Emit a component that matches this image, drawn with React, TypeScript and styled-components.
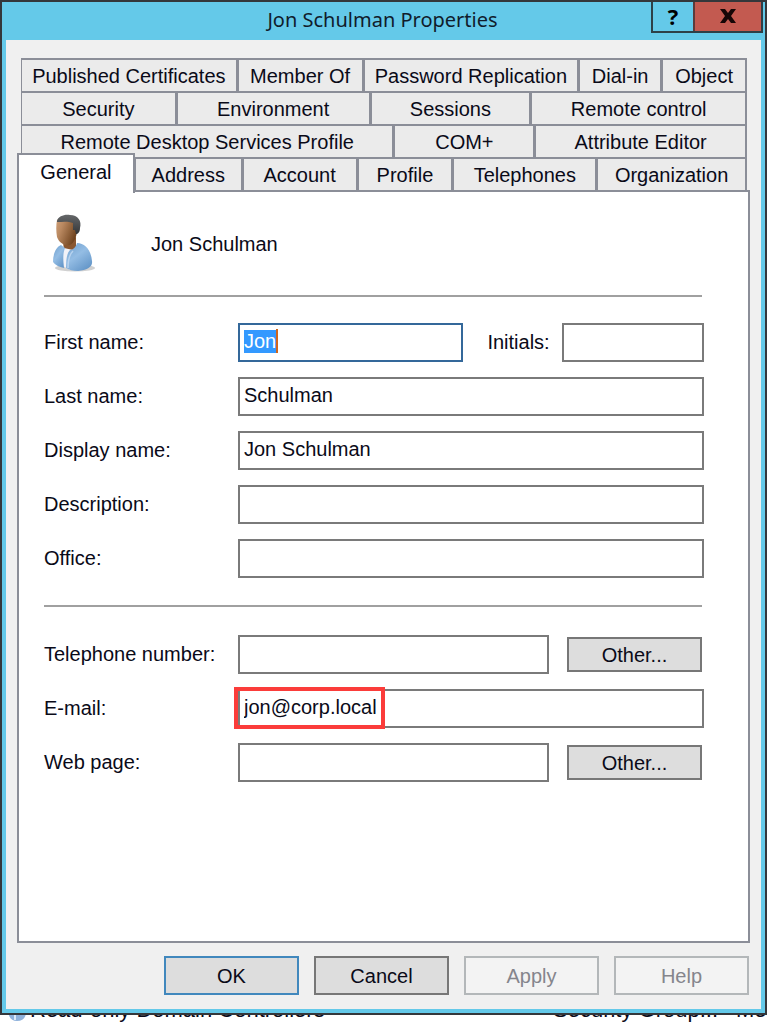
import React, { useEffect, useRef } from "react";
import styled, { createGlobalStyle } from "styled-components";

const edge = "#8b8e98";

const GlobalStyle = createGlobalStyle`
  *, *::before, *::after { box-sizing: border-box; }
  html, body { margin: 0; background: #fff; }
  body, button, input {
    font-family: "Liberation Sans", Arial, sans-serif;
    font-size: 20px;
    line-height: 24px;
    color: #0a0a18;
  }
`;

const Desktop = styled.div`
  display: flex;
  flex-direction: column;
  height: 100vh;
  min-height: 900px;
  overflow: hidden;
`;

const Dialog = styled.main`
  flex: 1;
  display: flex;
  flex-direction: column;
  border: 2px solid #34373b;
  background: #64c9e9;
  padding: 0 4px 4px;
  position: relative;
  z-index: 1;
`;

const TitleBar = styled.header`
  display: flex;
  align-items: flex-start;
  height: 38px;
`;

const Title = styled.h1`
  flex: 1;
  margin: 0;
  padding: 5px 0 0 108px;
  text-align: center;
  font: 400 20px/26px "Noto Sans", "Open Sans", sans-serif;
  color: #101c2c;
`;

const CaptionButtons = styled.div`
  display: flex;
  margin-right: -2px;
  border: 2px solid #2d4048;
  border-top: 0;
`;

const CaptionButton = styled.button<{ $close?: boolean }>`
  display: flex;
  align-items: center;
  justify-content: center;
  width: ${(p) => (p.$close ? 68 : 40)}px;
  height: 29px;
  padding: 0 0 2px;
  border: 0;
  border-left: ${(p) => (p.$close ? "2px solid #5c3b3b" : "0")};
  background: ${(p) => (p.$close ? "#c35a50" : "transparent")};
  font: 700 22px/26px "Open Sans", sans-serif;
  color: #000;
`;

const Body = styled.div`
  flex: 1;
  display: flex;
  flex-direction: column;
  padding: 18px 11px 14px;
  background: #f0f0f0;
`;

const Tabs = styled.div`
  padding: 0 3px 0 4px;
`;

const TabRow = styled.div<{ $columns: string }>`
  display: grid;
  grid-template-columns: ${(p) => p.$columns};
  height: 33px;
  border-left: 1px solid ${edge};
`;

const Tab = styled.button<{ $active?: boolean }>`
  min-width: 0;
  padding: 0;
  border: 0 solid ${edge};
  border-width: 2px 2px 0 1px;
  background: #ebebeb;
  white-space: nowrap;
  &:first-child { border-left-width: 0; }
  ${(p) =>
    p.$active &&
    `
    position: relative;
    z-index: 1;
    margin: -4px 0 -3px -5px;
    padding: 0 0 4px;
    background: #fff;
    &&:first-child { border-left-width: 2px; }
  `}
`;

const Panel = styled.section`
  flex: 1;
  padding: 24px 44px 24px 25px;
  border: 2px solid ${edge};
  background: #fff;
`;

const Identity = styled.div`
  display: flex;
  align-items: center;
  gap: 54px;
  height: 56px;
  padding-left: 9px;
`;

const Divider = styled.hr<{ $roomy?: boolean }>`
  height: 2px;
  margin: ${(p) => (p.$roomy ? "27px 2px 28px 0" : "23px 2px 26px 0")};
  border: 0;
  background: #a0a0a0;
`;

const Fields = styled.div`
  display: grid;
  gap: 15px;
`;

const Field = styled.div`
  display: flex;
  align-items: center;
`;

const Label = styled.label<{ $short?: boolean }>`
  flex: none;
  width: ${(p) => (p.$short ? 75 : 194)}px;
  padding-bottom: 2px;
`;

const Box = styled.div<{ $grow?: number }>`
  position: relative;
  flex: ${(p) => p.$grow ?? 1} 1 0;
  min-width: 0;
`;

const TextInput = styled.input`
  display: block;
  width: 100%;
  height: 39px;
  padding: 0 4px 3px;
  border: 2px solid #7a7a7a;
  border-radius: 0;
  background: #fff;
  outline: none;
  &:focus { border-color: #34689a; }
  &::selection { background: #3399ff; color: #fff; }
`;

const Caret = styled.span`
  position: absolute;
  top: 6px;
  left: 38px;
  width: 2px;
  height: 24px;
  background: #d0661c;
`;

const Highlight = styled.span`
  position: absolute;
  top: -2px;
  left: -4px;
  width: 151px;
  height: 42px;
  border: 4px solid #fb3c3a;
  pointer-events: none;
`;

const Spacer = styled.span<{ $wide?: boolean }>`
  flex: none;
  width: ${(p) => (p.$wide ? 24 : 18)}px;
`;

const PushButton = styled.button<{ $kind?: "default" | "small" }>`
  width: 135px;
  height: ${(p) => (p.$kind === "small" ? 35 : 39)}px;
  margin-right: ${(p) => (p.$kind === "small" ? 2 : 0)}px;
  padding: 0;
  border: 2px solid ${(p) => (p.$kind === "default" ? "#4188bd" : "#777")};
  background: #ddd;
  &:disabled {
    border-color: #b3b7b9;
    background: #f3f3f3;
    color: #85858c;
  }
`;

const Actions = styled.footer`
  display: flex;
  justify-content: flex-end;
  gap: 15px;
  margin-top: 13px;
  padding-right: 1px;
`;

const Behind = styled.div`
  flex: none;
  display: flex;
  align-items: flex-end;
  height: 9px;
  padding: 0 0 2px 8px;
  white-space: nowrap;
`;

const BehindName = styled.span`
  flex: 1;
  padding-left: 4px;
  font-size: 22px;
`;

const BehindType = styled.span<{ $last?: boolean }>`
  flex: none;
  width: ${(p) => (p.$last ? 31 : 183)}px;
  font-size: 22px;
`;

const tabRows = [
  { columns: "216fr 126fr 216fr 83fr 85fr", tabs: ["Published Certificates", "Member Of", "Password Replication", "Dial-in", "Object"] },
  { columns: "155fr 194fr 161fr 216fr", tabs: ["Security", "Environment", "Sessions", "Remote control"] },
  { columns: "373fr 141fr 212fr", tabs: ["Remote Desktop Services Profile", "COM+", "Attribute Editor"] },
  { columns: "113fr 108fr 115fr 96fr 144fr 150fr", tabs: ["General", "Address", "Account", "Profile", "Telephones", "Organization"] },
];

function UserPicture() {
  return (
    <svg width="44" height="60" viewBox="0 0 44 60" aria-hidden="true">
      <defs>
        <linearGradient id="skin" x1="0" y1="0" x2="1" y2="0.5">
          <stop offset="0" stopColor="#d0a078" />
          <stop offset="0.35" stopColor="#b98860" />
          <stop offset="1" stopColor="#70441f" />
        </linearGradient>
        <linearGradient id="shirt" x1="0" y1="0" x2="0.7" y2="1">
          <stop offset="0" stopColor="#6f9fcd" />
          <stop offset="0.5" stopColor="#94bde4" />
          <stop offset="1" stopColor="#6597c9" />
        </linearGradient>
        <linearGradient id="hair" x1="0" y1="0" x2="0" y2="1">
          <stop offset="0" stopColor="#656769" />
          <stop offset="1" stopColor="#343638" />
        </linearGradient>
      </defs>
      <ellipse cx="22" cy="54" rx="20" ry="3.5" fill="#9a9a9a" opacity="0.45" />
      <path d="M10 28 L23 23 L23 36 L17 42 L11 36 Z" fill="#8a5730" />
      <path d="M11 34 L20 36 L17 56 L10 52 Z" fill="#f1f2f8" />
      <path d="M8 31 C3 33 0 40 0 48 C2 51 6 53 11 54 C10 45 10 39 12 34 Z" fill="url(#shirt)" />
      <path d="M24 29 C32 29 38 36 39 47 C40 53 34 56 25 57 C20 57 16 56 13 54 C13 45 14 39 17 36 C20 36 23 33 24 29 Z" fill="url(#shirt)" />
      <path d="M15 54 C15 46 17 40 20 37" fill="none" stroke="#b7d2ee" strokeWidth="1.5" />
      <path d="M4 6 C8 3 21 4 22 10 L24 18 C23 24 21 29 17 31 C12 32 6 29 4 23 C3 17 3 11 4 6 Z" fill="url(#skin)" />
      <path d="M4 7 C5 2 12 0 17 1 C25 1 29 7 27 14 C27 18 25 20 23 20 L22 16 L20 16 L20 9 C15 7 9 8 4 8 Z" fill="url(#hair)" />
    </svg>
  );
}

function DirectoryIcon() {
  return (
    <svg width="18" height="16" viewBox="0 0 18 16" aria-hidden="true">
      <path d="M0 2 H18 C19 10 16 15 9 15 C3 15 0 11 0 2 Z" fill="#8fb2dc" />
      <path d="M7 4 V14" stroke="#dbe9f8" strokeWidth="2" />
    </svg>
  );
}

function TextField({ id, label, value }: { id: string; label: string; value?: string }) {
  return (
    <Field>
      <Label htmlFor={id}>{label}</Label>
      <Box>
        <TextInput id={id} defaultValue={value} />
      </Box>
    </Field>
  );
}

function MultiField({ id, label }: { id: string; label: string }) {
  return (
    <Field>
      <Label htmlFor={id}>{label}</Label>
      <Box>
        <TextInput id={id} />
      </Box>
      <Spacer />
      <PushButton $kind="small">Other...</PushButton>
    </Field>
  );
}

export default function App() {
  const firstName = useRef<HTMLInputElement>(null);

  useEffect(() => {
    firstName.current?.focus();
    firstName.current?.select();
  }, []);

  return (
    <Desktop>
      <GlobalStyle />
      <Dialog>
        <TitleBar>
          <Title>Jon Schulman Properties</Title>
          <CaptionButtons>
            <CaptionButton aria-label="Context help">?</CaptionButton>
            <CaptionButton $close aria-label="Close">
              <svg width="16" height="14" viewBox="0 0 16 14" aria-hidden="true">
                <path d="M0 0 H5 L8 4 L11 0 H16 L11 7 L16 14 H11 L8 10 L5 14 H0 L5 7 Z" fill="#160606" />
              </svg>
            </CaptionButton>
          </CaptionButtons>
        </TitleBar>
        <Body>
          <Tabs role="tablist">
            {tabRows.map((row) => (
              <TabRow key={row.columns} $columns={row.columns}>
                {row.tabs.map((name) => (
                  <Tab key={name} role="tab" aria-selected={name === "General"} $active={name === "General"}>
                    {name}
                  </Tab>
                ))}
              </TabRow>
            ))}
          </Tabs>
          <Panel role="tabpanel">
            <Identity>
              <UserPicture />
              <span>Jon Schulman</span>
            </Identity>
            <Divider />
            <Fields>
              <Field>
                <Label htmlFor="first">First name:</Label>
                <Box $grow={226}>
                  <TextInput id="first" ref={firstName} defaultValue="Jon" />
                  <Caret />
                </Box>
                <Spacer $wide />
                <Label $short htmlFor="initials">Initials:</Label>
                <Box $grow={142}>
                  <TextInput id="initials" />
                </Box>
              </Field>
              <TextField id="last" label="Last name:" value="Schulman" />
              <TextField id="display" label="Display name:" value="Jon Schulman" />
              <TextField id="description" label="Description:" />
              <TextField id="office" label="Office:" />
            </Fields>
            <Divider $roomy />
            <Fields>
              <MultiField id="phone" label="Telephone number:" />
              <Field>
                <Label htmlFor="email">E-mail:</Label>
                <Box>
                  <TextInput id="email" defaultValue="jon@corp.local" />
                  <Highlight />
                </Box>
              </Field>
              <MultiField id="web" label="Web page:" />
            </Fields>
          </Panel>
          <Actions>
            <PushButton $kind="default">OK</PushButton>
            <PushButton>Cancel</PushButton>
            <PushButton disabled>Apply</PushButton>
            <PushButton disabled>Help</PushButton>
          </Actions>
        </Body>
      </Dialog>
      <Behind>
        <DirectoryIcon />
        <BehindName>Read-only Domain Controllers</BehindName>
        <BehindType>Security Group...</BehindType>
        <BehindType $last>Me</BehindType>
      </Behind>
    </Desktop>
  );
}
